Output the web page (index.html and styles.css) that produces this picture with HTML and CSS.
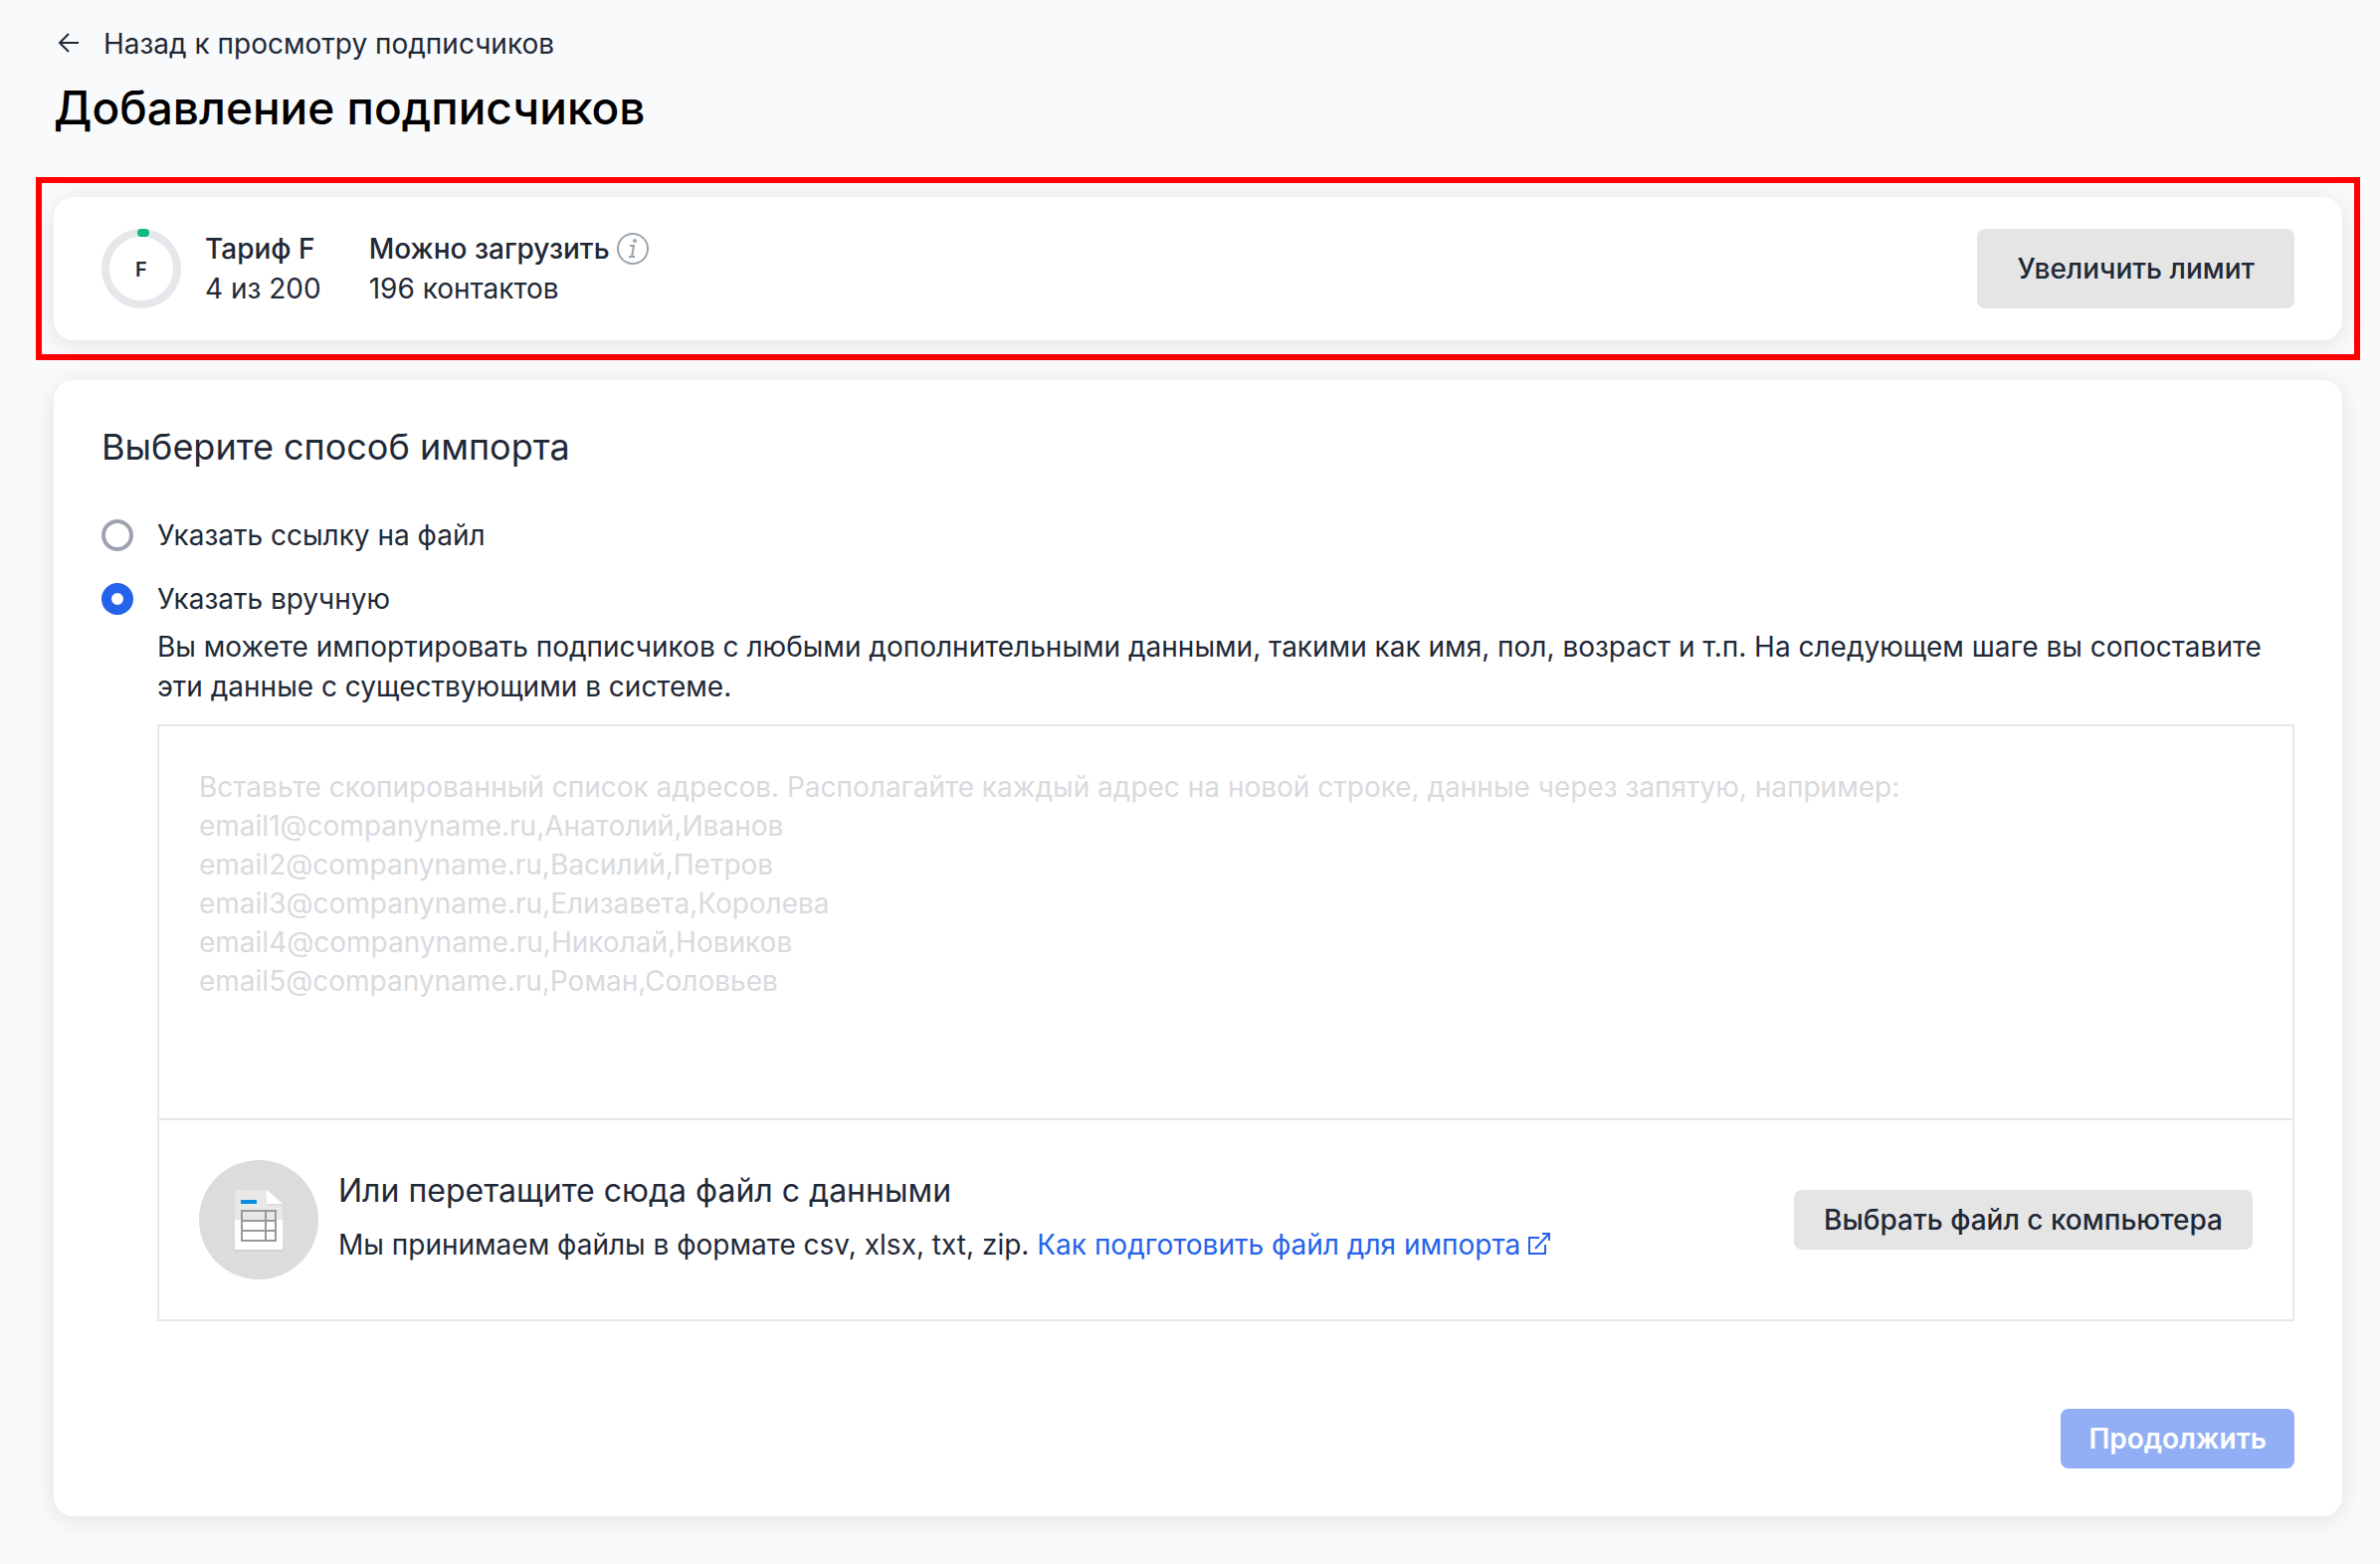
FILE: index.html
```html
<!DOCTYPE html>
<html lang="ru">
<head>
  <meta charset="UTF-8">
  <meta name="viewport" content="width=device-width, initial-scale=1.0">
  <title>Добавление подписчиков</title>
  <link rel="stylesheet" href="styles.css">
</head>
<body>

  <header class="page-header">
    <a class="back-link" href="#">
      <svg class="back-icon" viewBox="0 0 24 24" width="24" height="24" aria-hidden="true">
        <path d="M21 11H3M11 2l-9 9 9 9" />
      </svg>
      Назад к просмотру подписчиков
    </a>
    <h1>Добавление подписчиков</h1>
  </header>

  <main>
    <!-- Tariff -->
    <div class="highlight">
      <section class="card tariff">
        <svg class="ring" viewBox="0 0 80 80" width="80" height="80" aria-hidden="true">
          <circle class="ring-track" cx="40" cy="40" r="36" />
          <path class="ring-value" d="M40 4a36 36 0 0 1 4 0" />
          <text class="ring-label" x="40" y="48">F</text>
        </svg>
        <div class="tariff-col">
          <b>Тариф F</b>
          <span>4 из 200</span>
        </div>
        <div class="tariff-col">
          <b>Можно загрузить
            <svg class="info-icon" viewBox="0 0 32 32" width="32" height="32" aria-hidden="true">
              <circle cx="16" cy="16" r="15" />
              <path d="M13 13h4l-2 11M12 24h6" />
              <circle class="info-dot" cx="18" cy="8" r="2" />
            </svg>
          </b>
          <span>196 контактов</span>
        </div>
        <button class="btn btn-large" type="button">Увеличить лимит</button>
      </section>
    </div>

    <!-- Import form -->
    <form class="card import">
      <h2>Выберите способ импорта</h2>

      <label class="option">
        <input type="radio" name="method" value="link">
        Указать ссылку на файл
      </label>
      <label class="option">
        <input type="radio" name="method" value="manual" checked>
        Указать вручную
      </label>

      <div class="manual">
        <p>Вы можете импортировать подписчиков с любыми дополнительными данными, такими как имя, пол, возраст и т.п. На следующем шаге вы сопоставите эти данные с существующими в системе.</p>

        <div class="source">
          <textarea aria-label="Список адресов" placeholder="Вставьте скопированный список адресов. Располагайте каждый адрес на новой строке, данные через запятую, например:&#10;email1@companyname.ru,Анатолий,Иванов&#10;email2@companyname.ru,Василий,Петров&#10;email3@companyname.ru,Елизавета,Королева&#10;email4@companyname.ru,Николай,Новиков&#10;email5@companyname.ru,Роман,Соловьев"></textarea>

          <div class="drop">
            <svg class="file-icon" viewBox="0 0 120 120" width="120" height="120" aria-hidden="true">
              <circle cx="60" cy="60" r="60" fill="#dcdcdc" />
              <path d="M35 88h50v4H35z" fill="#d0d0d0" />
              <path d="M36 30h32l16 14v46H36z" fill="#fff" />
              <path d="M36 30h32l16 14v16H36z" fill="#e8e8e8" />
              <path d="M68 44h16v2H68z" fill="#dcdcdc" />
              <path d="M68 30v14h16z" fill="#fff" />
              <path d="M42 40h16v4H42z" fill="#0a8fe0" />
              <path d="M43 51h34v30H43zM43 61h34M43 71h34M67 51v30" fill="none" stroke="#999" stroke-width="2" />
            </svg>
            <div class="drop-text">
              <h3>Или перетащите сюда файл с данными</h3>
              <p>Мы принимаем файлы в формате csv, xlsx, txt, zip.
                <a href="#">Как подготовить файл для импорта
                  <svg class="external-icon" viewBox="0 0 22 22" width="22" height="22" aria-hidden="true">
                    <path d="M11 5H1v16h16V12M7 16L20 2M14 1h7v7" />
                  </svg></a>
              </p>
            </div>
            <button class="btn" type="button">Выбрать файл с компьютера</button>
          </div>
        </div>
      </div>

      <div class="actions">
        <button class="btn btn-primary" type="submit" disabled>Продолжить</button>
      </div>
    </form>
  </main>

</body>
</html>
```

FILE: styles.css
```css
* {
  box-sizing: border-box;
}

body {
  margin: 0;
  background: #f9fafc;
  font-family: Inter, 'Liberation Sans', sans-serif;
  font-size: 28px;
  line-height: 40px;
  color: #1f2937;
}

h1, h2, h3, p {
  margin: 0;
}

a {
  color: #2563eb;
  text-decoration: none;
}

.page-header {
  padding: 24px 54px 42px;
}

.back-link {
  display: flex;
  align-items: center;
  gap: 22px;
  padding-left: 4px;
  color: #1f2937;
}

.back-icon {
  fill: none;
  stroke: #1f2937;
  stroke-width: 2;
}

h1 {
  margin-top: 16px;
  font-size: 46px;
  font-weight: 500;
  line-height: 56px;
  color: #000;
}

main {
  padding: 0 20px 48px 36px;
}

.highlight {
  padding: 14px 12px;
  border: 6px solid #f00;
}

.card {
  background: #fff;
  border-radius: 20px;
  box-shadow: 0 4px 24px rgba(0, 0, 0, 0.1);
}

.tariff {
  display: flex;
  align-items: center;
  padding: 32px 48px;
}

.ring {
  margin-right: 24px;
}

.ring-track,
.ring-value {
  fill: none;
  stroke: #e5e7eb;
  stroke-width: 8;
}

.ring-value {
  stroke: #10b981;
  stroke-linecap: round;
}

.ring-label {
  font-size: 20px;
  font-weight: 600;
  text-anchor: middle;
  fill: #1f2937;
}

.tariff-col {
  display: flex;
  flex-direction: column;
  margin-right: 48px;
}

.tariff-col b {
  display: flex;
  align-items: center;
  gap: 7px;
  font-weight: 500;
}

.info-icon {
  fill: none;
  stroke: #9ca3af;
  stroke-width: 2;
}

.info-dot {
  fill: #9ca3af;
  stroke: none;
}

.btn {
  height: 60px;
  padding: 0 30px;
  border: none;
  border-radius: 8px;
  background: #e5e5e5;
  font: inherit;
  font-weight: 500;
  color: #1f2937;
  white-space: nowrap;
  cursor: pointer;
}

.btn-large {
  height: 80px;
  margin-left: auto;
  padding: 0 40px;
}

.btn-primary {
  padding: 0 28px;
  background: #92aff5;
  font-weight: 600;
  color: #fff;
}

.import {
  margin: 20px 18px 0;
  padding: 48px;
}

h2 {
  margin-bottom: 50px;
  font-size: 36px;
  font-weight: 400;
  line-height: 38px;
}

.option {
  display: flex;
  align-items: center;
  gap: 24px;
  margin-bottom: 24px;
}

.option input {
  appearance: none;
  width: 32px;
  height: 32px;
  margin: 0;
  border: 4px solid #9ca3af;
  border-radius: 50%;
  background: #fff;
}

.option input:checked {
  border: 10px solid #2563eb;
}

.manual {
  margin-top: -16px;
  padding-left: 56px;
}

.source {
  margin-top: 18px;
  border: 2px solid #e5e7eb;
}

textarea {
  display: block;
  width: 100%;
  height: 394px;
  padding: 42px 40px;
  border: none;
  outline: none;
  resize: none;
  background: transparent;
  font: inherit;
  line-height: 39px;
  color: #1f2937;
}

textarea::placeholder {
  color: #d8dade;
}

.drop {
  display: flex;
  align-items: center;
  gap: 20px;
  padding: 40px;
  border-top: 2px solid #e5e7eb;
}

.drop-text {
  flex: 1;
  padding-bottom: 6px;
}

h3 {
  margin-bottom: 12px;
  font-size: 32px;
  font-weight: 400;
  line-height: 44px;
}

.external-icon {
  fill: none;
  stroke: #2563eb;
  stroke-width: 2;
}

.actions {
  display: flex;
  justify-content: flex-end;
  margin-top: 88px;
}
```
